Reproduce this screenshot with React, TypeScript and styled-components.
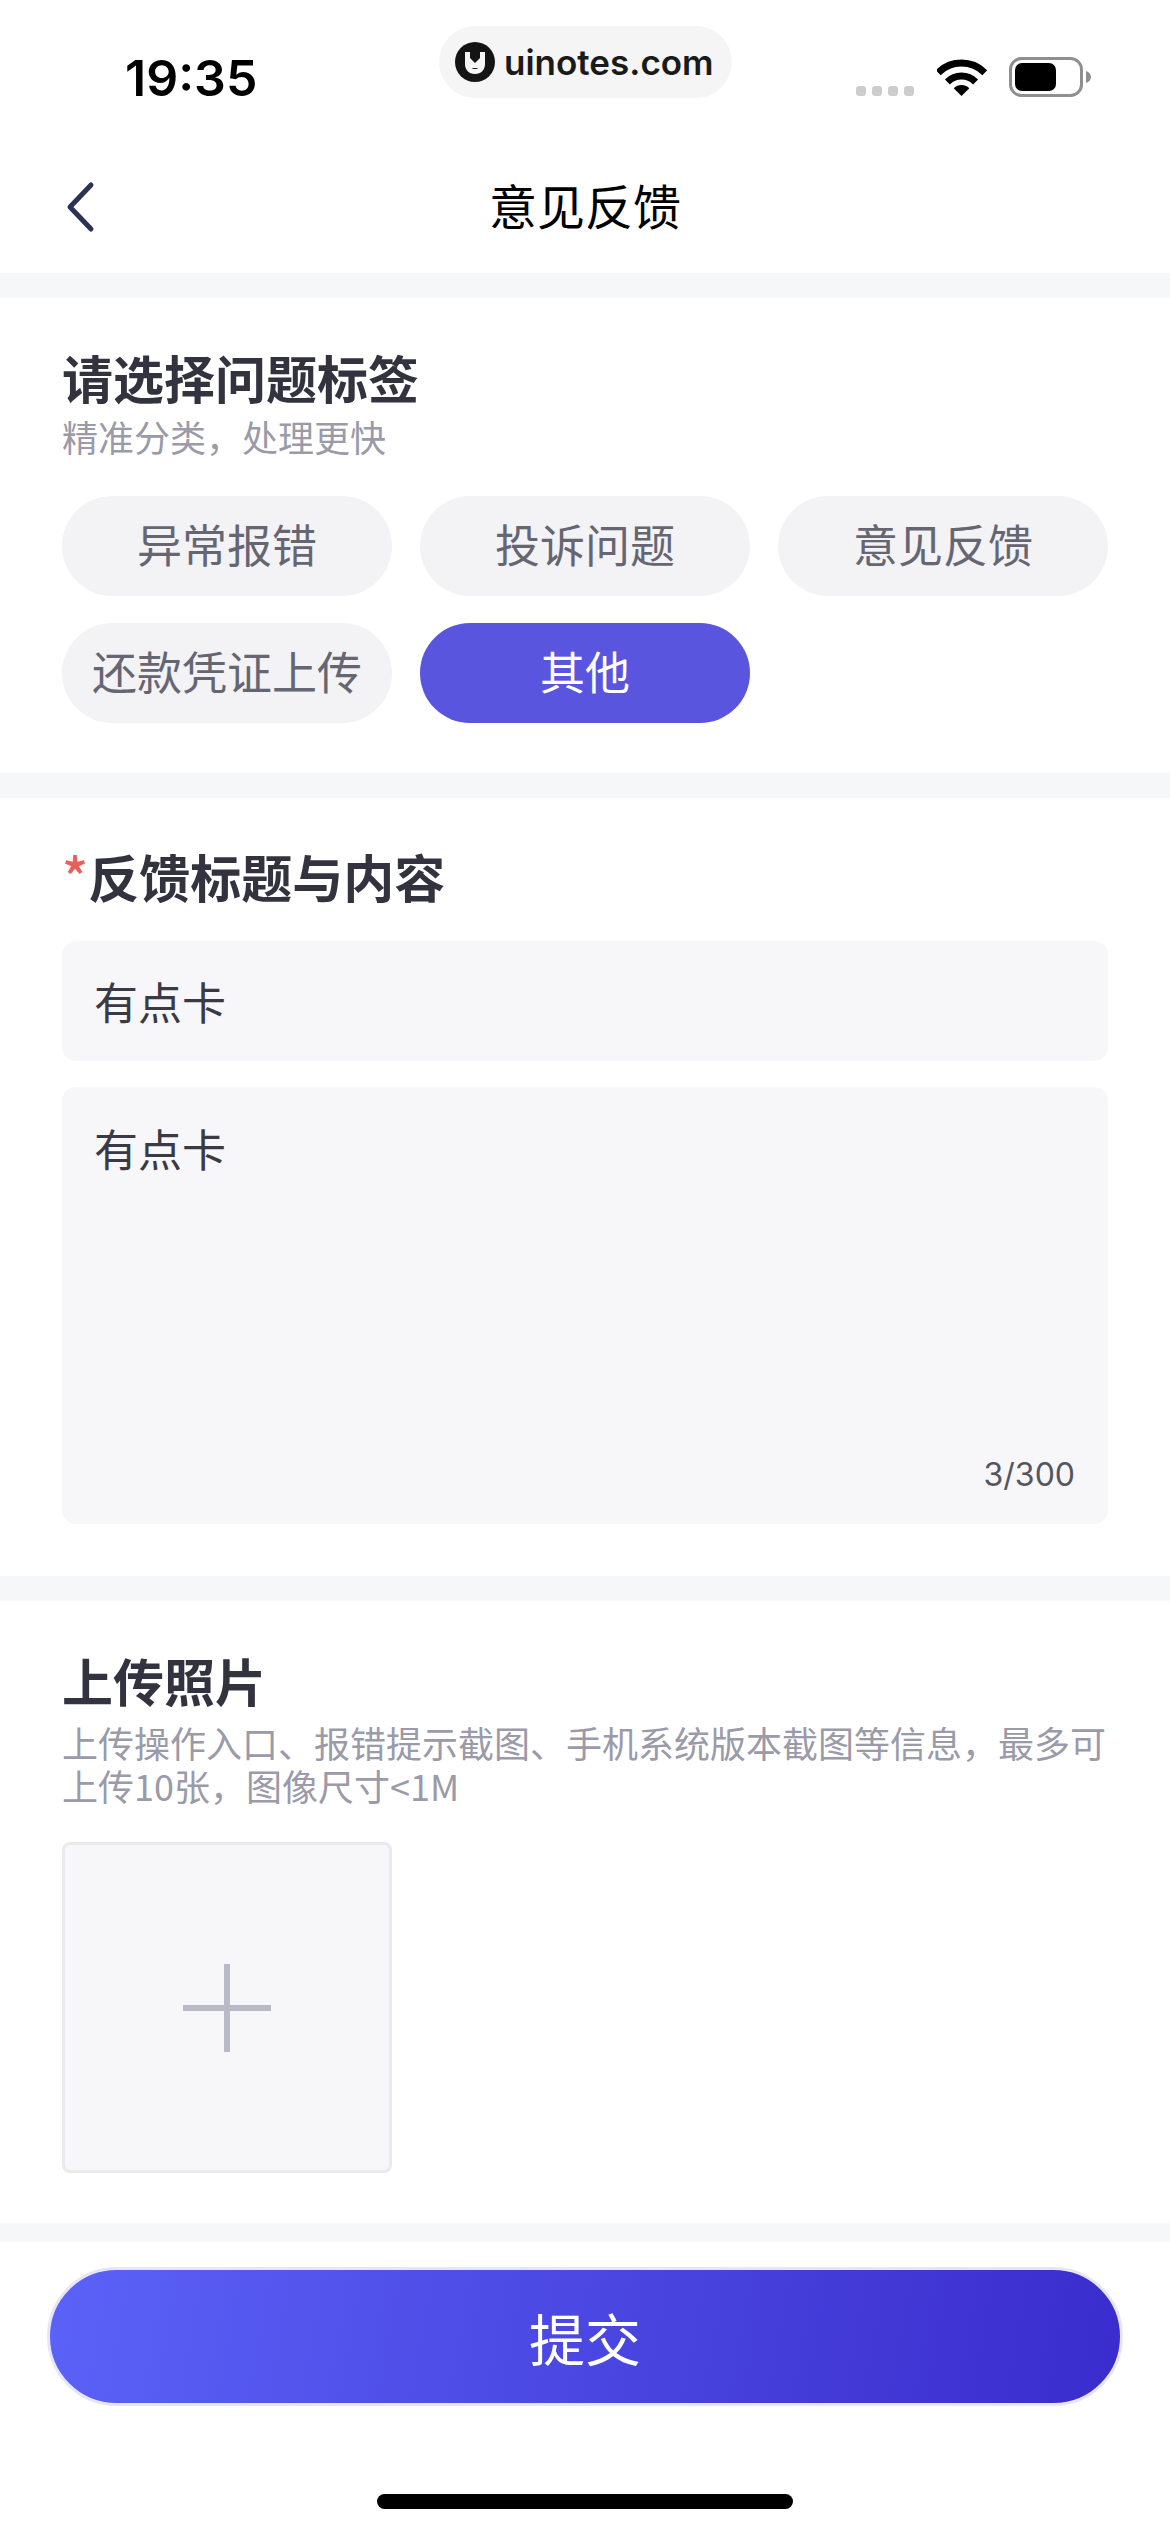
import styled, { createGlobalStyle } from 'styled-components';

const cjk = '"Noto Sans CJK SC", "Noto Sans", sans-serif';

const GlobalStyle = createGlobalStyle`
  html, body {
    margin: 0;
    padding: 0;
    background: #ffffff;
  }
  * {
    box-sizing: border-box;
  }
`;

const Page = styled.div`
  position: relative;
  width: 1170px;
  height: 2532px;
  overflow: hidden;
  display: flex;
  flex-direction: column;
  background: #f6f7f9;
  font-family: ${cjk};
`;

const Header = styled.header`
  background: #ffffff;
`;

const StatusBar = styled.div`
  height: 141px;
  padding: 58px 78px 0 125px;
  display: flex;
  justify-content: space-between;
  align-items: flex-start;
`;

const Time = styled.div`
  font-family: Inter, sans-serif;
  font-size: 50px;
  font-weight: 600;
  line-height: 40px;
  color: #000000;
`;

const StatusIcons = styled.div`
  display: flex;
  align-items: flex-end;
  height: 39px;
`;

const SignalDots = styled.div`
  display: flex;
  gap: 6px;
  margin-right: 23px;
  margin-bottom: 1px;
`;

const SignalDot = styled.span`
  width: 10px;
  height: 10px;
  border-radius: 3px;
  background: #cdcdcd;
`;

const WifiIcon = styled.svg`
  display: block;
  margin-right: 22px;
  margin-bottom: 1px;
`;

const BatteryIcon = styled.svg`
  display: block;
`;

const Watermark = styled.div`
  position: absolute;
  left: 439px;
  top: 26px;
  width: 293px;
  height: 72px;
  padding-left: 16px;
  border-radius: 36px;
  background: #f5f5f5;
  display: flex;
  align-items: center;
  gap: 9px;
`;

const WatermarkText = styled.span`
  font-family: Inter, sans-serif;
  font-size: 35px;
  font-weight: 600;
  color: #1a1a1a;
`;

const NavBar = styled.nav`
  position: relative;
  height: 132px;
  display: flex;
  align-items: center;
  justify-content: center;
`;

const BackButton = styled.svg`
  position: absolute;
  left: 64px;
  top: 39px;
`;

const NavTitle = styled.h1`
  margin: 0;
  font-size: 48px;
  font-weight: 400;
  line-height: 60px;
  padding-bottom: 6px;
  color: #000000;
`;

const Section = styled.section<{ $top: number; $bottom: number }>`
  margin-top: 25px;
  padding: ${(p) => p.$top}px 62px ${(p) => p.$bottom}px;
  background: #ffffff;
`;

const SectionTitle = styled.h2`
  margin: 0;
  font-size: 51px;
  font-weight: 700;
  line-height: 60px;
  color: #33333f;
`;

const Required = styled.span`
  color: #e8605c;
  font-weight: 500;
  font-size: 54px;
`;

const Hint = styled.p<{ $gap: number }>`
  margin: ${(p) => p.$gap}px 0 0;
  font-size: 36px;
  font-weight: 400;
  line-height: 43px;
  color: #9a9aa8;
`;

const ChipGrid = styled.div`
  margin-top: 38px;
  display: grid;
  grid-template-columns: repeat(3, 330px);
  column-gap: 28px;
  row-gap: 27px;
`;

const Chip = styled.div<{ $active?: boolean }>`
  height: 100px;
  padding-bottom: 4px;
  border-radius: 50px;
  display: flex;
  align-items: center;
  justify-content: center;
  font-size: 45px;
  line-height: 60px;
  white-space: nowrap;
  background: ${(p) => (p.$active ? '#5955de' : '#f3f3f6')};
  color: ${(p) => (p.$active ? '#ffffff' : '#666673')};
`;

const FieldStack = styled.div`
  margin-top: 35px;
  display: flex;
  flex-direction: column;
  gap: 26px;
`;

const TitleField = styled.div`
  height: 120px;
  padding: 0 32px;
  border-radius: 14px;
  background: #f7f7f9;
  display: flex;
  align-items: center;
  font-size: 44px;
  color: #3a3a44;
`;

const ContentField = styled.div`
  height: 437px;
  padding: 31px 33px 27px 32px;
  border-radius: 14px;
  background: #f7f7f9;
  display: flex;
  flex-direction: column;
  font-size: 44px;
  line-height: 60px;
  color: #3a3a44;
`;

const Counter = styled.div`
  margin-top: auto;
  text-align: right;
  font-family: Inter, sans-serif;
  font-size: 32px;
  line-height: 44px;
  color: #555560;
`;

const UploadBox = styled.div`
  margin-top: 35px;
  width: 330px;
  height: 331px;
  border: 3px solid #e9e9ee;
  border-radius: 8px;
  background: #f7f7f9;
  display: flex;
  align-items: center;
  justify-content: center;
`;

const Footer = styled.footer`
  flex: 1;
  margin-top: 19px;
  padding: 25px 47px 0;
  background: #ffffff;
  display: flex;
  flex-direction: column;
  align-items: center;
`;

const SubmitButton = styled.div`
  width: 100%;
  height: 139px;
  border: 3px solid #e6e6f6;
  border-radius: 70px;
  background: linear-gradient(100deg, #5b62f7 0%, #3a2ccd 100%);
  display: flex;
  align-items: center;
  justify-content: center;
  font-size: 56px;
  color: #ffffff;
`;

const HomeBar = styled.div`
  margin-top: 88px;
  width: 416px;
  height: 15px;
  border-radius: 8px;
  background: #000000;
`;

const tags = ['异常报错', '投诉问题', '意见反馈', '还款凭证上传', '其他'];

export default function App() {
  return (
    <Page>
      <GlobalStyle />
      <Header>
        <StatusBar>
          <Time>19:35</Time>
          <StatusIcons>
            <SignalDots>
              <SignalDot />
              <SignalDot />
              <SignalDot />
              <SignalDot />
            </SignalDots>
            <WifiIcon width="50" height="38" viewBox="0 0 50 38">
              <path d="M1.2 14.7A33 33 0 0 1 47.8 14.7" fill="none" stroke="#000" strokeWidth="7" />
              <path d="M10.4 23.9A20 20 0 0 1 38.6 23.9" fill="none" stroke="#000" strokeWidth="7" />
              <path d="M24.5 38L16.7 30.2A11 11 0 0 1 32.3 30.2Z" fill="#000" />
            </WifiIcon>
            <BatteryIcon width="83" height="40" viewBox="0 0 83 40">
              <rect x="1.5" y="1.5" width="71" height="37" rx="11" fill="none" stroke="#8f8f8f" strokeWidth="3" />
              <rect x="6" y="6" width="41" height="28" rx="7" fill="#000" />
              <path d="M77 14C80 15 82 17 82 20C82 23 80 25 77 26Z" fill="#8f8f8f" />
            </BatteryIcon>
          </StatusIcons>
        </StatusBar>
        <Watermark>
          <svg width="40" height="40" viewBox="0 0 40 40">
            <circle cx="20" cy="20" r="20" fill="#141414" />
            <path d="M10 10H15V22C15 25 17 27 20 27C23 27 25 25 25 22V10H30V22C30 28 26 32 20 32C14 32 10 28 10 22Z" fill="#f5f5f5" />
            <path d="M15 16L20 21L25 16V26H15Z" fill="#f5f5f5" />
          </svg>
          <WatermarkText>uinotes.com</WatermarkText>
        </Watermark>
        <NavBar>
          <BackButton width="32" height="54" viewBox="0 0 32 54">
            <path d="M27 5L6 27L27 49" fill="none" stroke="#2a3355" strokeWidth="5" strokeLinecap="round" strokeLinejoin="round" />
          </BackButton>
          <NavTitle>意见反馈</NavTitle>
        </NavBar>
      </Header>

      <Section $top={49} $bottom={50}>
        <SectionTitle>请选择问题标签</SectionTitle>
        <Hint $gap={8}>精准分类，处理更快</Hint>
        <ChipGrid>
          {tags.map((tag) => (
            <Chip key={tag} $active={tag === '其他'}>
              {tag}
            </Chip>
          ))}
        </ChipGrid>
      </Section>

      <Section $top={47} $bottom={52}>
        <SectionTitle>
          <Required>*</Required>反馈标题与内容
        </SectionTitle>
        <FieldStack>
          <TitleField>有点卡</TitleField>
          <ContentField>
            有点卡
            <Counter>3/300</Counter>
          </ContentField>
        </FieldStack>
      </Section>

      <Section $top={49} $bottom={50}>
        <SectionTitle>上传照片</SectionTitle>
        <Hint $gap={11}>上传操作入口、报错提示截图、手机系统版本截图等信息，最多可上传10张，图像尺寸&lt;1M</Hint>
        <UploadBox>
          <svg width="88" height="88" viewBox="0 0 88 88">
            <path d="M41 0H47V41H88V47H47V88H41V47H0V41H41Z" fill="#b9b9c8" />
          </svg>
        </UploadBox>
      </Section>

      <Footer>
        <SubmitButton>提交</SubmitButton>
        <HomeBar />
      </Footer>
    </Page>
  );
}
